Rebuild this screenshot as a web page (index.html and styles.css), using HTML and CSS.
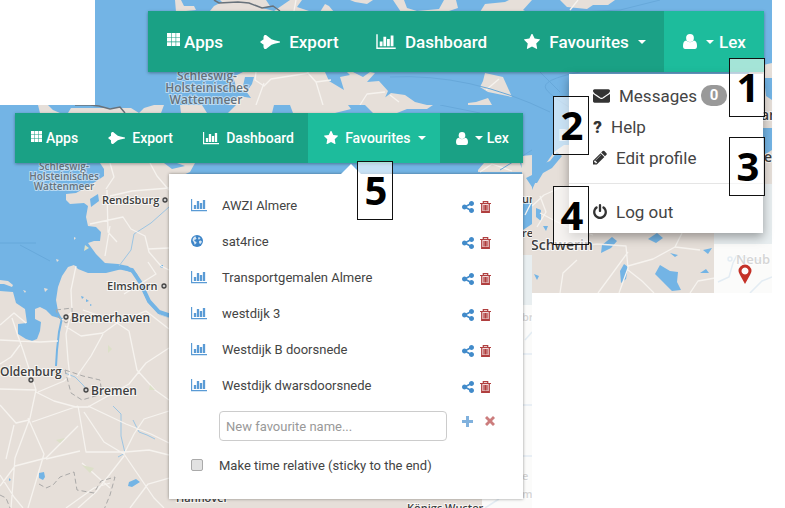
FILE: index.html
```html
<!DOCTYPE html>
<html lang="en">
<head>
<meta charset="utf-8">
<meta name="viewport" content="width=device-width, initial-scale=1">
<title>Lizard navigation</title>
<link rel="stylesheet" href="styles.css">
</head>
<body>
<svg class="sprite" aria-hidden="true">
  <symbol id="i-apps" viewBox="0 0 13 13"><path d="M0 0h4v4H0zM4.6 0h4v4h-4zM9.2 0H13v4H9.200zM0 4.600h4v4H0zM4.600 4.600h4v4h-4zM9.200 4.600H13v4H9.200zM0 9.200h4V13H0zM4.600 9.200h4V13h-4zM9.200 9.200H13V13H9.200z"/></symbol>
  <symbol id="i-jet" viewBox="0 0 20 14"><path d="M0 7l2.500-2 1-.5V1.800L4.500 0H6l5.500 4.300 3 1L20 6.500v1l-5.500 1.200-3 1L6 14H4.500l-1-1.800V9.500l-1-.5z"/></symbol>
  <symbol id="i-chart" viewBox="0 0 2048 1792"><path d="M660 896v512h-296v-512h296zm384-512v1024h-296v-1024h296zm1004 1152v150h-2048v-1558h150v1408h1898zm-620-896v768h-296v-768h296zm384-384v1152h-296v-1152h296z"/></symbol>
  <symbol id="i-star" viewBox="64 64 1664 1664"><path d="M1728 647q0 22-26 48l-363 354 86 500q1 7 1 20 0 21-10.500 35.500t-30.500 14.500q-19 0-40-12l-449-236-449 236q-22 12-40 12-21 0-31.500-14.500t-10.500-35.500q0-6 2-20l86-500-364-354q-25-27-25-48 0-37 56-46l502-73 225-455q19-41 49-41t49 41l225 455 502 73q56 9 56 46z"/></symbol>
  <symbol id="i-user" viewBox="0 0 14 15"><ellipse cx="7" cy="4" rx="3.900" ry="4"/><path d="M0 12q0-5 3.200-5.400Q7 10 10.800 6.600 14 7 14 12q0 3-2.200 3H2.200Q0 15 0 12z"/></symbol>
  <symbol id="i-mail" viewBox="0 256 1792 1408"><path d="M1792 710v794q0 66-47 113t-113 47h-1472q-66 0-113-47t-47-113v-794q44 49 101 87 362 246 497 345 57 42 92.500 65.500t94.500 48 110 24.500h2q51 0 110-24.500t94.500-48 92.500-65.500q170-123 498-345 57-39 100-87zm0-294q0 79-49 151t-122 123q-376 261-468 325-10 7-42.500 31t-54 38.500-52 32.500-57.500 27-50 9h-2q-23 0-50-9t-57.500-27-52-32.500-54-38.500-42.500-31q-91-64-262-182.500t-205-142.500q-62-42-117-115.500t-55-136.500q0-78 41.500-130t118.500-52h1472q65 0 112.500 47t47.500 113z"/></symbol>
  <symbol id="i-pencil" viewBox="128 128 1536 1536"><path d="M491 1536l91-91-235-235-91 91v107h128v128h107zm523-928q0-22-22-22-10 0-17 7l-542 542q-7 7-7 17 0 22 22 22 10 0 17-7l542-542q7-7 7-17zm-54-192l416 416-832 832h-416v-416zm683 96q0 53-37 90l-166 166-416-416 166-165q36-38 90-38 53 0 91 38l235 234q37 39 37 91z"/></symbol>
  <symbol id="i-power" viewBox="128 0 1536 1664"><path d="M1664 896q0 156-61 298t-164 245-245 164-298 61-298-61-245-164-164-245-61-298q0-182 80.500-343t226.500-270q43-32 95.500-25t83.500 50q32 42 24.500 94.500t-49.500 84.500q-98 74-151.500 181t-53.500 228q0 104 40.500 198.500t109.500 163.500 163.500 109.500 198.500 40.500 198.500-40.500 163.500-109.500 109.500-163.500 40.500-198.500q0-121-53.500-228t-151.500-181q-42-32-49.500-84.500t24.500-94.500q31-43 84-50t95 25q146 109 226.500 270t80.500 343zm-640-768v640q0 52-38 90t-90 38-90-38-38-90v-640q0-52 38-90t90-38 90 38 38 90z"/></symbol>
  <symbol id="i-share" viewBox="128 128 1536 1536"><path d="M1344 1024q133 0 226.500 93.500t93.500 226.500-93.500 226.500-226.500 93.500-226.500-93.500-93.500-226.500q0-12 2-34l-360-180q-92 86-218 86-133 0-226.500-93.500t-93.500-226.500 93.500-226.500 226.500-93.500q126 0 218 86l360-180q-2-22-2-34 0-133 93.500-226.500t226.500-93.500 226.500 93.500 93.500 226.500-93.500 226.500-226.500 93.500q-126 0-218-86l-360 180q2 22 2 34t-2 34l360 180q92-86 218-86z"/></symbol>
  <symbol id="i-trash" viewBox="0 0 11 12"><path d="M1.600 2.500h7.800V12H1.600z" fill-opacity=".2"/><path d="M3.300 2V.7h4.400V2M0 2.500h11M1.700 2.500v8.800h7.600V2.500M4 4v5.500M5.500 4v5.500M7 4v5.500" fill="none" stroke="currentColor" stroke-width="1.200"/><path d="M1.600 10h7.800v2H1.600z"/></symbol>
  <symbol id="i-globe" viewBox="0 0 12 12"><circle cx="6" cy="6" r="6"/><path d="M2 3.200L3.700 1.600l1.500.2-.5 1 1 .6-1 1.100-1.200.3-.2 1 1 .6 1.200.6-.2 1.300-1.100 1-.3.800-.6-1.700-.7-1.700L1.500 5.300zM8 6l1.700-.4 1.200.8-.6 1.600-1.100 1-1-.8zM7.500 2l1.200.4 1 1.200-1 .2-.6.9-1-.7z" fill="#fff" fill-opacity=".8"/></symbol>
  <symbol id="i-plus" viewBox="0 0 11 11"><path d="M4 0h3v4h4v3H7v4H4V7H0V4h4z"/></symbol>
  <symbol id="i-times" viewBox="0 0 10 10"><path d="M2 0l3 3 3-3 2 2-3 3 3 3-2 2-3-3-3 3-2-2 3-3-3-3z"/></symbol>
</svg>

<main class="stage">
  <section class="panel panel-user" aria-label="User menu">
    <svg class="map" viewBox="95 0 677 293" preserveAspectRatio="xMinYMin slice" aria-hidden="true">
      <path class="land" d="M175 0h6l3 6 10 0 2 4-20 2zM210 11l4-5 8-4-2-2h46l4 6-8 2 12 3 16-11h12l-5 7 12 4zM350 0h23l-6 4-12-2zM325 4l4 2 5 6-14 0zM393 0h11l3 8 10 3 22-2 5-9h12l2 8-12 4h-45zM480 12l5-8 20-2 4-2h23l-9 10 4 2zM560 0h55l-7 5-15 0-6 4-20-2z"/>
      <path class="land" d="M233 77l10-5h110l10 5 7-5 5 1-8 9 12-1 9 10-4 9-9 5H228l11-9 12 2-5-7-10-2-1-6zM375 105l16-12 14 2 10 7 12 3z"/>
      <path class="land" d="M485 73l18 4 9 20-24-5-8-5 3-6zM468 103l8-1 12-4 4 7h-24zM744 79l10-12 18-4v121H740z"/>
      <path class="land" d="M532 190l8-18 14-20 10-7h30l40 5h110v143H532z"/>
      <path class="water" d="M532 174l8-9 10-4 7-9 5 4-10 12-9 5-6 10h-5zM764 78l8 0v22l-6-4zM762 128h10v22l-8 5zM602 245l10-8 5 4-6 7-10 5zM620 271l4-7 4 3-2 12-5 4zM660 265l10 6 8 1-1 10 4 8-9 1-9-9-8-8zM648 239l9-6 6 5-7 5zM536 208l5 2 0 11-5-4zM543 226h5l-2 5zM703 250l9-2-4 6zM670 253l8 2-3 2zM534 274l5 2-2 4zM700 273l6-4 3 4z"/>
      <path class="water" d="M245 77l9 0-2 7-5 7-4-5zM325 72l4 9 15 9-4-13 10-2-5-5z"/>
      <g class="road">
        <path d="M256 72l-1 8 9 6 7-7 38-6M264 83l-8 22M307 72l9 10 7 23M316 82l15-2M360 105l7-11 18-2M390 95l9 7M578 0l-8 10M296 0l-2 11M532 206l12-11 20-9M540 196l6 16-9 15M540 213l27 14 26 8M532 245l35 3 30-4 29 2 2 22-9 25M628 252l-16 22-14 19M628 266l25-7 22-12 25 3M675 247l7-14M628 270l14 11 12 12M560 293l3-20 14-13M690 293l8-12 17-3M486 90l13-11"/>
      </g>
      <path class="rail" d="M214 0l5 3 19-1 11 1 13 5 11-2 7 5"/>
      <path class="sealine" d="M560 13l60-3 40-10M580 72q-40 8-34 17t40 28M390 77q80-4 160 35M540 72l20 20"/>
      <path class="veil" d="M714 184h58v60h-58z"/>
      <path class="blank" d="M714 244h58v49h-58z"/>
      <path class="faint" d="M718 282l11-5 4-14 4-8M750 293l12-12 10-4M742 257l20 4"/>
      <g class="label area" font-size="12">
        <text x="207" y="80" text-anchor="middle">Schleswig-</text>
        <text x="207" y="92" text-anchor="middle">Holsteinisches</text>
        <text x="206" y="104" text-anchor="middle">Wattenmeer</text>
      </g>
      <g class="label" font-size="14">
        <text x="531" y="250">Schwerin</text>
        <text x="761" y="120">ar</text>
        <text x="764" y="162">e</text>
        <text x="559" y="140" class="pale">D</text>
        <text x="736" y="264" class="pale" font-size="13">Neub</text>
      </g>
      <circle cx="730" cy="259" r="2" class="faint"/>
      <path class="pin" fill-rule="evenodd" d="M745 284l-5-9q-1.500-3-1.500-4a6.500 6.500 0 0 1 13 0q0 1-1.500 4zM745 267.500a3.500 3.500 0 1 0 .01 0z"/>
    </svg>
    <nav class="bar" aria-label="Main">
      <a class="tab tight" href="#"><svg class="i-apps"><use href="#i-apps"/></svg>Apps</a>
      <a class="tab" href="#"><svg class="i-jet"><use href="#i-jet"/></svg>Export</a>
      <a class="tab" href="#"><svg class="i-chart"><use href="#i-chart"/></svg>Dashboard</a>
      <button class="tab" type="button"><svg class="i-star"><use href="#i-star"/></svg>Favourites<span class="caret"></span></button>
      <button class="tab active" type="button" aria-expanded="true"><svg class="i-user"><use href="#i-user"/></svg><span class="who"><span class="caret"></span>Lex</span></button>
    </nav>
    <div class="menu">
      <a href="#"><svg class="m-mail"><use href="#i-mail"/></svg><span>Messages</span><span class="badge">0</span></a>
      <a href="#"><span class="quest" aria-hidden="true">?</span><span>Help</span></a>
      <a href="#"><svg class="m-pencil"><use href="#i-pencil"/></svg><span>Edit profile</span></a>
      <hr>
      <a href="#"><svg class="m-power"><use href="#i-power"/></svg><span>Log out</span></a>
    </div>
    <span class="callout c1">1</span>
    <span class="callout c2">2</span>
    <span class="callout c3">3</span>
    <span class="callout c4">4</span>
  </section>

  <section class="panel panel-favs" aria-label="Favourites menu">
    <svg class="map" viewBox="0 105 532 403" preserveAspectRatio="xMinYMin slice" aria-hidden="true">
      <path class="land" d="M38 105h10l5 5 7 3H40zM68 113l3-5h60l8 5 5-5 10-3h10l-3 8zM180 105h22l5 8h-26zM228 113l8-8h38l-2 8zM290 105h58l3 4-16 4h-42zM365 105h68l-6 4h-20l-10 4h-24z"/>
      <path class="land" d="M100 163L195 163 190 172 172 180 172 319 160 315 148 303 143 288 137 274 128 266 118 264 105 263 96 254 88 243 94 241 100 241 101 232 96 227 88 226 86 217 88 206 84 203 70 204 66 200 66 194 76 193 92 184 104 176 104 169z"/>
      <path class="water" d="M90 199l8-5 1 7-8 6zM164 163l8 6 13-3-8-3z"/>
      <path class="land" d="M0 291L13 292 16 303 25 309 27 323 18 324 18 334 26 339 32 341 37 339 40 331 41 322 35 319 35 309 40 307 46 310 52 316 62 319 58 311 56 300 58 287 62 276 68 267 74 265 78 269 88 273 106 273 122 269 133 273 140 285 148 303 160 315 172 319 172 508 0 508z"/>
      <path class="land" d="M160 490h372v18H160zM478 170l6-7h36l3 9h-45zM522 172l-1-16 11-1v100h-10zM0 280l8 1 5 4-1 2-8-3-4 0z"/>
      <path class="water" d="M522 202h10v22l-9 6zM526 178l6-3v12zM39 473l5-1 1 5-2 3-4-2zM129 482l7-3 4 3-8 5-4-1zM9 478l2 2-2 1zM81 296l3 1-2 2zM86 299l3 2-3 1zM90 304l2 1-2 1zM160 265l3 0 0 3-3-1z"/>
      <path class="land" d="M44 288l4 1-3 3zM56 259l3 1-2 2zM74 237l2 1-2 2zM23 290l3 1-1 2z"/>
      <path class="river wide" d="M118 267l14 3 8 12 9 19 10 11 12 4"/>
      <path class="river" d="M62 318l-3 14-2 18-1 16"/>
      <path class="river thin" d="M169 207l-18 16-17 11-3 16-12 16M65 373l10 4 8 8 4 5M113 406l8 8 0 22 4 17-7 4M133 420l6 12 8 3 8 4"/>
      <g class="road">
        <path d="M110 163l4 14-8 12M150 163l7 13 12 14M110 196l22-5 37-3M90 224l33-7 8 12 14 7 4 16 12 14 8 4M107 190l1 42 9 10M110 226l-5 30M148 249l21-1M148 262l8 12-32 20M76 266l-5 24 1 22-10 8M72 309l-6 25 2 26 2 18M65 326l16 10 22-3 14-10 12 8 8 39 18 20 14 10M83 310l35 12 28-11 23 18M103 334l-12 22-14 20M0 325l14-12 12 10M12 318l6 18 5 14 13 40-6 28-15 40-4 50M0 340l40 2 18-1M20 345l-9 12-11 7M38 392l26-11 6-6M36 392l18 9 22 6 12 0 18-10 23-13 17-21 23-15M0 389l36 1M28 418l16 36-16 54M32 422l46-16M78 406l8 46 39 0 24-2 20 5M84 412l20 30 20 12 30 44 10 10M124 454l10-20 10-15 25-8M78 426l-32 32-31 8-15 20M46 459l34-8M88 406l38 18 25 10 18 9M0 405l16 18 13-3M14 425l-8 34M110 488l-28-25M124 456l-28 36-18 16M0 475l14 22 9 11M110 483l-16 5-28 20M130 508l18-24 21-6M525 215l7-14M480 172l12-8 20 7"/>
      </g>
      <path class="rail" d="M75 105h15l9 1 11 3 10-2 5 6"/>
      <path class="border" d="M56 310l16-2 0 11-6 4-7-5zM65 370l18 6 17 4 2 14-20 6-11-7zM39 484l7 4 7-3 7-8 14-5 3 18 17 3 7-12 14-4-5 18-7 17M0 495l6 3 4 10"/>
      <g class="green"><path d="M85 245l4 3-5 3zM108 345l4 4-4 4zM82 465l12 3-4 5zM150 385l5 5-6 0zM56 440l9-2-5 5zM92 320l4 2-5 3z"/></g>
      <path class="sealine" d="M0 243h36M20 245l30 16M440 105l40 8M500 170l32-20"/>
      <path class="veil" d="M523 255h9v50h-9z"/>
      <path class="blank" d="M482 305h50v203h-50z"/>
      <path class="faint" d="M523 354h9M523 405h9M523 456h9M485 508l14-9M525 340l7-8"/>
      <g class="label area" font-size="10">
        <text x="64" y="170" text-anchor="middle">Schleswig-</text>
        <text x="64" y="180" text-anchor="middle">Holsteinisches</text>
        <text x="64" y="190" text-anchor="middle">Wattenmeer</text>
      </g>
      <g class="label" font-size="11">
        <text x="102" y="204">Rendsburg</text>
        <text x="107" y="290">Elmshorn</text>
        <text x="71" y="322" font-size="12">Bremerhaven</text>
        <text x="0" y="376" font-size="12">Oldenburg</text>
        <text x="91" y="395" font-size="12">Bremen</text>
        <text x="176" y="502">Hannover</text>
        <text x="407" y="512">Königs Wuster</text>
        <text x="522" y="203">un</text>
        <text x="522" y="237">rei</text>
        <text x="522" y="321" class="pale">br</text>
        <text x="522" y="480" class="pale">e</text>
        <text x="522" y="498" class="pale">m</text>
      </g>
      <g class="town"><circle cx="165" cy="200" r="2"/><circle cx="164" cy="286" r="2"/><circle cx="66" cy="317" r="2"/><circle cx="31" cy="380" r="2"/><circle cx="86" cy="390" r="2"/></g>
    </svg>
    <nav class="bar" aria-label="Main, favourites open">
      <a class="tab tight" href="#"><svg class="i-apps"><use href="#i-apps"/></svg>Apps</a>
      <a class="tab" href="#"><svg class="i-jet"><use href="#i-jet"/></svg>Export</a>
      <a class="tab" href="#"><svg class="i-chart"><use href="#i-chart"/></svg>Dashboard</a>
      <button class="tab active" type="button" aria-expanded="true"><svg class="i-star"><use href="#i-star"/></svg>Favourites<span class="caret"></span></button>
      <button class="tab" type="button"><svg class="i-user"><use href="#i-user"/></svg><span class="who"><span class="caret"></span>Lex</span></button>
    </nav>
    <div class="favs">
      <ul>
        <li><svg class="kind"><use href="#i-chart"/></svg><a href="#">AWZI Almere</a><button type="button" class="share" aria-label="Share"><svg><use href="#i-share"/></svg></button><button type="button" class="trash" aria-label="Delete"><svg><use href="#i-trash"/></svg></button></li>
        <li><svg class="kind globe"><use href="#i-globe"/></svg><a href="#">sat4rice</a><button type="button" class="share" aria-label="Share"><svg><use href="#i-share"/></svg></button><button type="button" class="trash" aria-label="Delete"><svg><use href="#i-trash"/></svg></button></li>
        <li><svg class="kind"><use href="#i-chart"/></svg><a href="#">Transportgemalen Almere</a><button type="button" class="share" aria-label="Share"><svg><use href="#i-share"/></svg></button><button type="button" class="trash" aria-label="Delete"><svg><use href="#i-trash"/></svg></button></li>
        <li><svg class="kind"><use href="#i-chart"/></svg><a href="#">westdijk 3</a><button type="button" class="share" aria-label="Share"><svg><use href="#i-share"/></svg></button><button type="button" class="trash" aria-label="Delete"><svg><use href="#i-trash"/></svg></button></li>
        <li><svg class="kind"><use href="#i-chart"/></svg><a href="#">Westdijk B doorsnede</a><button type="button" class="share" aria-label="Share"><svg><use href="#i-share"/></svg></button><button type="button" class="trash" aria-label="Delete"><svg><use href="#i-trash"/></svg></button></li>
        <li><svg class="kind"><use href="#i-chart"/></svg><a href="#">Westdijk dwarsdoorsnede</a><button type="button" class="share" aria-label="Share"><svg><use href="#i-share"/></svg></button><button type="button" class="trash" aria-label="Delete"><svg><use href="#i-trash"/></svg></button></li>
      </ul>
      <form class="new">
        <input type="text" aria-label="New favourite name" placeholder="New favourite name...">
        <button type="button" class="add" aria-label="Add"><svg><use href="#i-plus"/></svg></button>
        <button type="button" class="cancel" aria-label="Cancel"><svg><use href="#i-times"/></svg></button>
      </form>
      <div class="sticky"><input type="checkbox" id="relative"><label for="relative">Make time relative (sticky to the end)</label></div>
    </div>
    <span class="callout c5">5</span>
  </section>
</main>
</body>
</html>
```
FILE: styles.css
```css
* { box-sizing: border-box; }

body {
  margin: 0;
  background: #fff;
  color: #444;
  font-family: Roboto, "Liberation Sans", sans-serif;
}

a { color: inherit; text-decoration: none; }

button {
  border: 0;
  padding: 0;
  background: none;
  color: inherit;
  font: inherit;
  cursor: pointer;
}

svg { fill: currentColor; flex: none; display: block; }

.sprite { position: absolute; width: 0; height: 0; }

/* Two overlapping map screens */
.stage {
  display: grid;
  grid-template-columns: 95px minmax(437px, 1fr) 240px 13px;
  grid-template-rows: 105px 188px auto;
  min-height: 100vh;
  overflow: hidden;
}

.panel {
  position: relative;
  display: flex;
  flex-direction: column;
  background: #73b4e5;
}

.panel-user { grid-area: 1 / 2 / 3 / 4; }
.panel-favs { grid-area: 2 / 1 / 4 / 3; }

/* Map drawing */
.map { position: absolute; inset: 0; width: 100%; height: 100%; }
.land { fill: #e6dfd9; }
.water { fill: #73b4e5; }
.river { fill: none; stroke: #73b4e5; stroke-width: 2; }
.river.wide { stroke-width: 4; }
.river.thin { stroke: #9cc5e3; stroke-width: 1; }
.road { fill: none; stroke: #f6f3ef; stroke-width: 1.3; stroke-linejoin: round; }
.rail { fill: none; stroke: #68727b; stroke-width: 1.5; }
.border { fill: none; stroke: #aaa9a8; stroke-dasharray: 5 3; }
.green { fill: #dce0c8; }
.sealine { fill: none; stroke: #67a8da; stroke-width: 1; }
.veil { fill: #e8eef0; }
.blank { fill: #fbfbfa; }
.faint { fill: none; stroke: #e3ecf3; stroke-width: 1.5; }
.town { fill: #ccc; stroke: #444; stroke-width: 1.3; }
.pin { fill: #c43127; }

.label {
  font-family: "Open Sans", "Noto Sans", sans-serif;
  font-weight: 600;
  fill: #3e3e3e;
  stroke: #fff;
  stroke-opacity: .7;
  stroke-width: 2;
  paint-order: stroke;
}

.label.area { fill: #66727c; stroke-opacity: .5; }
.label .pale { fill: #d5d5d5; }

/* Navigation bar */
.bar {
  position: relative;
  display: flex;
  background: #1aa185;
  color: #fff;
  font-weight: 500;
  box-shadow: 0 1px 3px rgba(0, 0, 0, .35);
}

.tab {
  display: flex;
  flex: 1 1 auto;
  align-items: center;
  white-space: nowrap;
}

.active { background: #1dbc9c; }

.who { display: flex; align-items: center; }

.caret {
  border: 4px solid transparent;
  border-top-color: currentColor;
  border-bottom: 0;
}

.i-apps { margin-bottom: 4px; }

.panel-user .bar { height: 61px; margin: 11px 8px 0 53px; font-size: 17px; }
.panel-user .tab { padding: 0 18px 0 19px; gap: 9px; }
.panel-user .tight { gap: 4px; }
.panel-user .who { gap: 5px; }
.panel-user .i-apps { width: 13px; height: 13px; }
.panel-user .i-jet { width: 20px; height: 14px; }
.panel-user .i-chart { width: 20px; height: 17px; }
.panel-user .i-star { width: 16px; height: 16px; }
.panel-user .i-user { width: 14px; height: 15px; }

.panel-favs .bar { height: 50px; margin: 8px 9px 0 15px; font-size: 14px; }
.panel-favs .tab { padding: 0 14px 0 16px; gap: 7px; }
.panel-favs .tight { gap: 4px; }
.panel-favs .who { gap: 4px; }
.panel-favs .i-apps { width: 11px; height: 11px; }
.panel-favs .i-jet { width: 17px; height: 12px; }
.panel-favs .i-chart { width: 16px; height: 14px; }
.panel-favs .i-star { width: 14px; height: 14px; }
.panel-favs .i-user { width: 12px; height: 13px; }

/* User menu */
.menu {
  position: relative;
  align-self: flex-end;
  width: 194px;
  margin: 2px 9px 0 0;
  padding: 6px 0;
  background: #fff;
  font-size: 17px;
  box-shadow: 0 4px 10px rgba(0, 0, 0, .35);
}

.menu a {
  display: flex;
  align-items: center;
  gap: 9px;
  height: 31px;
  padding-left: 24px;
}

.menu svg, .quest { color: #333; }
.m-mail { width: 17px; height: 14px; }
.m-pencil, .m-power { width: 14px; height: 15px; }
.quest { width: 9px; font-weight: 900; text-align: center; }

.menu hr {
  height: 1px;
  margin: 10px 0 12px;
  border: 0;
  background: #e5e5e5;
}

.badge {
  width: 26px;
  margin-left: -5px;
  border-radius: 10px;
  background: #999;
  color: #fff;
  font-size: 15px;
  font-weight: 700;
  line-height: 21px;
  text-align: center;
}

/* Favourites list */
.favs {
  position: relative;
  align-self: flex-end;
  width: 354px;
  margin: 11px 9px 9px 0;
  padding: 13px 28px 22px 22px;
  background: #fff;
  font-size: 13px;
  box-shadow: 0 0 3px rgba(0, 0, 0, .4);
}

.favs::before {
  content: "";
  position: absolute;
  left: 172px;
  bottom: 100%;
  border: 10px solid transparent;
  border-top: 0;
  border-bottom-color: #fff;
}

.favs ul { margin: 0; padding: 0; list-style: none; }

.favs li {
  display: grid;
  grid-template-columns: 31px 1fr 18px 15px;
  align-items: center;
  height: 36px;
}

.kind { width: 16px; height: 14px; color: #5a9bd5; }
.globe { width: 12px; height: 12px; color: #3d85c8; }
.share, .trash { padding-top: 4px; }
.share svg { width: 12px; height: 12px; color: #428bca; }
.trash svg { width: 11px; height: 12px; color: #b03f3f; }

.new { display: flex; align-items: center; margin: 8px 0 0 28px; }

.new input {
  flex: 1;
  min-width: 0;
  height: 30px;
  margin-right: 15px;
  padding: 0 6px;
  border: 1px solid #ccc;
  border-radius: 4px;
  font: inherit;
}

.new input::placeholder { color: #999; }
.new button { align-self: flex-start; padding-top: 5px; }
.add svg { width: 11px; height: 11px; color: #80b1dd; }
.cancel { margin-left: 12px; }
.cancel svg { width: 10px; height: 10px; color: #cc7d7d; }

.sticky { display: flex; align-items: center; gap: 16px; height: 24px; margin-top: 12px; }

.sticky input {
  appearance: none;
  width: 12px;
  height: 12px;
  margin: 0;
  border: 1px solid #aaa;
  border-radius: 2px;
  background: #e2e2e2;
}

/* Numbered callouts over the screens */
.callout {
  position: absolute;
  width: 36px;
  height: 59px;
  padding-left: 2px;
  border: 1px solid #111;
  background: rgba(255, 255, 255, .6);
  color: #000;
  font: 700 40px/55px "Noto Sans", "Open Sans", sans-serif;
  text-align: center;
}

.c1 { top: 58px; right: 7px; }
.c2 { top: 96px; right: 183px; }
.c3 { top: 137px; right: 7px; }
.c4 { top: 186px; right: 183px; }
.c5 { top: 56px; right: 139px; }
```
